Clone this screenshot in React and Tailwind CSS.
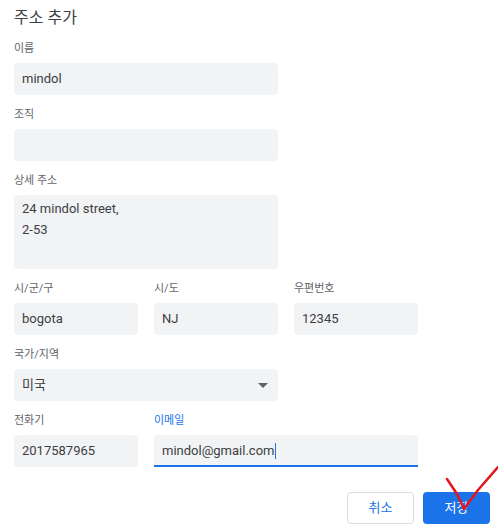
import React from "react";

const font = { fontFamily: "Roboto, 'Noto Sans CJK KR', sans-serif" };

function Label({ children, blue, className = "" }) {
  return (
    <div
      className={`text-[11px] leading-[14px] mb-[7px] ${blue ? "text-[#1a73e8]" : "text-[#5f6368]"} ${className}`}
    >
      {children}
    </div>
  );
}

function Field({ value, className = "", focused, cursor }) {
  return (
    <div
      className={`h-[32px] rounded-[4px] bg-[#f1f3f4] pl-2 flex items-center text-[13px] text-[#3c4043] ${focused ? "border-b-2 border-[#1a73e8] rounded-b-none pt-[2px]" : ""} ${className}`}
    >
      <span>{value}</span>
      {cursor && <span className="inline-block w-[1px] h-[16px] bg-[#1a73e8] ml-[1px]" />}
    </div>
  );
}

export default function App() {
  return (
    <div className="relative w-[498px] h-[531px] bg-white overflow-hidden" style={font}>
      <div className="pl-[14px] pt-[6px]">
        <div className="text-[16px] leading-[24px] text-[#3c4043]">주소 추가</div>

        <div className="mt-[12px] w-[264px]">
          <Label>이름</Label>
          <Field value="mindol" />
        </div>

        <div className="mt-[13px] w-[264px]">
          <Label>조직</Label>
          <Field value="" />
        </div>

        <div className="mt-[13px] w-[264px]">
          <Label>상세 주소</Label>
          <div className="h-[74px] rounded-[4px] bg-[#f1f3f4] pl-2 pt-[3px] text-[13px] leading-[21px] text-[#3c4043]">
            <div>24 mindol street,</div>
            <div>2-53</div>
          </div>
        </div>

        <div className="mt-[13px] flex gap-4">
          <div className="w-[124px]">
            <Label>시/군/구</Label>
            <Field value="bogota" />
          </div>
          <div className="w-[124px]">
            <Label>시/도</Label>
            <Field value="NJ" />
          </div>
          <div className="w-[124px]">
            <Label>우편번호</Label>
            <Field value="12345" />
          </div>
        </div>

        <div className="mt-[13px] w-[264px]">
          <Label>국가/지역</Label>
          <div className="h-[32px] rounded-[4px] bg-[#f1f3f4] pl-2 pr-[10px] flex items-center justify-between text-[13px] text-[#3c4043]">
            <span>미국</span>
            <svg width="10" height="5" viewBox="0 0 10 5">
              <path d="M0 0 L10 0 L5 5 Z" fill="#5f6368" />
            </svg>
          </div>
        </div>

        <div className="mt-[13px] flex gap-4">
          <div className="w-[124px]">
            <Label>전화기</Label>
            <Field value="2017587965" />
          </div>
          <div className="w-[264px]">
            <Label blue>이메일</Label>
            <Field value="mindol@gmail.com" focused cursor />
          </div>
        </div>

        <div className="mt-[25px] flex justify-end gap-[9px] pr-[8px]">
          <button className="w-[67px] h-[32px] rounded-[4px] border border-[#dadce0] bg-white text-[13px] text-[#1a73e8]">
            취소
          </button>
          <button className="w-[67px] h-[32px] rounded-[4px] bg-[#1a73e8] text-[13px] text-white">
            저장
          </button>
        </div>
      </div>

      <svg className="absolute left-0 top-0 pointer-events-none" width="498" height="531">
        <polyline
          points="447,479 457,494 464,509 478,490 498,467"
          fill="none"
          stroke="#e8141c"
          strokeWidth="2.5"
          strokeLinecap="round"
          strokeLinejoin="round"
        />
      </svg>
    </div>
  );
}
